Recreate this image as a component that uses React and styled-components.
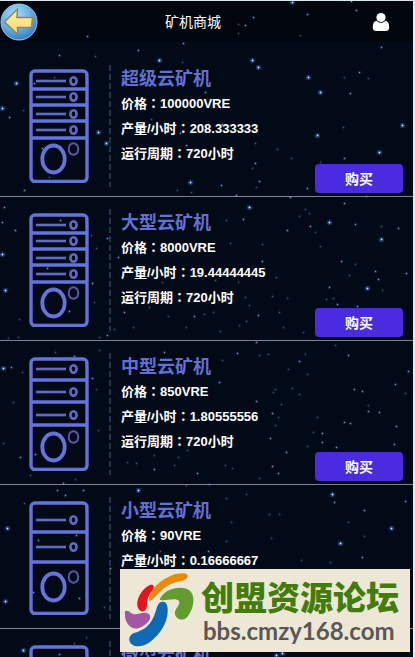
// 矿机商城 页面：顶部栏 + 矿机列表 + 右下角论坛标识

import React from 'react';
import styled, { createGlobalStyle } from 'styled-components';

const GlobalStyle = createGlobalStyle`
  * {
    box-sizing: border-box;
  }

  body {
    margin: 0;
    background: #020814;
    font-family: "Liberation Sans", "Noto Sans CJK SC", sans-serif;
  }
`;

const Page = styled.div`
  position: relative;
  height: 100vh;
  display: flex;
  flex-direction: column;
  overflow: hidden;
  border-top: 1px solid #d9e8ea;
  border-right: 2px solid #e6edf5;
  background: #020a17;
`;

const Sky = styled.svg`
  position: absolute;
  inset: 0;
  width: 100%;
  height: 100%;
  pointer-events: none;
`;

const HeaderBar = styled.header`
  flex: none;
  height: 41px;
  display: flex;
  align-items: center;
  background: rgba(0, 2, 8, 0.6);
`;

const IconButton = styled.button`
  width: ${({ $width }) => $width}px;
  height: 40px;
  display: flex;
  align-items: center;
  justify-content: center;
  padding: 0;
  border: none;
  background: none;
  cursor: pointer;
`;

const PageTitle = styled.h1`
  flex: 1;
  margin: 0;
  text-align: center;
  font-size: 14px;
  font-weight: 400;
  line-height: 20px;
  color: #fff;
`;

const List = styled.main`
  position: relative;
  flex: 1;
  min-height: 0;
  padding-top: 11px;
  overflow-y: auto;
  scrollbar-width: none;
`;

const Row = styled.article`
  height: 144px;
  display: flex;
  padding: 12px 10px 3px 29px;
  border-bottom: 1px solid #7d8291;
`;

const Picture = styled.div`
  width: 82px;
  height: 122px;
  flex: none;
  padding-top: 4px;
  background: repeating-linear-gradient(#26334d 0 6px, transparent 6px 9px) right top / 2px 100% no-repeat;
`;

const Info = styled.div`
  flex: 1;
  padding-left: 10px;
`;

const Name = styled.h2`
  margin: 0;
  padding-top: 2px;
  font-size: 18px;
  font-weight: 700;
  line-height: 24px;
  color: #6270d6;
`;

const Line = styled.p`
  margin: 0;
  font-size: 13px;
  font-weight: 700;
  line-height: 25px;
  white-space: nowrap;
  color: #fff;
`;

// 日文字形的冒号居中
const Colon = styled.span`
  font-family: "Noto Sans CJK JP", sans-serif;
  line-height: 1;
`;

const BuyButton = styled.button`
  align-self: flex-end;
  width: 88px;
  height: 29px;
  margin-left: -88px;
  padding: 0;
  border: none;
  border-radius: 4px;
  background: #4a2be0;
  font-family: inherit;
  font-size: 14px;
  font-weight: 700;
  line-height: 28px;
  color: #fff;
  cursor: pointer;
`;

const Watermark = styled.aside`
  position: absolute;
  right: 3px;
  bottom: 5px;
  width: 290px;
  height: 83px;
  display: flex;
  align-items: center;
  gap: 6px;
  padding-left: 3px;
  background: #ede8d5;
`;

const ForumName = styled.div`
  font-size: 33px;
  font-weight: 900;
  line-height: 40px;
  white-space: nowrap;
  color: #437c0c;
`;

const ForumUrl = styled.div`
  padding-left: 2px;
  font-family: Lato, sans-serif;
  font-size: 24px;
  font-weight: 700;
  line-height: 24px;
  color: #5a5756;
`;

// [x, y, 亮度 1-3]
const stars = [
  [87, 36, 2], [59, 55, 2], [95, 56, 1], [138, 50, 2], [159, 60, 3], [183, 43, 2], [182, 62, 1], [16, 83, 3], [34, 83, 2],
  [292, 2, 3], [351, 1, 2], [356, 10, 2], [307, 14, 2], [253, 17, 2], [245, 25, 2], [238, 24, 1], [238, 33, 1], [300, 35, 1],
  [381, 47, 2], [252, 60, 3], [258, 67, 3], [308, 77, 3], [320, 92, 3], [359, 72, 2], [344, 77, 1], [368, 78, 1], [350, 93, 2],
  [2, 108, 3], [9, 117, 2], [23, 110, 1], [98, 132, 3], [106, 143, 3], [24, 190, 2], [42, 148, 2], [49, 177, 1], [54, 77, 1],
  [190, 182, 3], [186, 145, 2], [180, 133, 2], [151, 119, 1], [177, 190, 1], [191, 192, 1], [205, 92, 2],
  [402, 125, 3], [317, 135, 3], [379, 152, 3], [343, 127, 1], [344, 158, 2], [320, 162, 1], [255, 143, 1], [277, 149, 1],
  [291, 158, 1], [255, 163, 2], [252, 168, 1], [259, 181, 2], [256, 187, 1], [307, 188, 2], [221, 185, 2], [236, 195, 2],
  [290, 197, 2], [366, 196, 2], [222, 124, 2], [4, 207, 2], [2, 222, 2], [15, 230, 2], [2, 254, 3], [5, 290, 3], [60, 220, 2],
  [107, 238, 2], [96, 248, 1], [118, 257, 2], [92, 283, 2], [94, 302, 1], [69, 311, 2], [107, 335, 2], [99, 337, 1],
  [114, 329, 1], [19, 319, 1], [47, 268, 2], [124, 312, 2], [162, 282, 1], [149, 307, 1], [168, 316, 1], [194, 316, 2],
  [204, 314, 1], [186, 327, 1], [133, 327, 1], [8, 338, 1], [18, 337, 1], [91, 235, 1], [249, 207, 3], [243, 219, 2],
  [226, 220, 1], [344, 203, 2], [329, 222, 3], [310, 226, 2], [305, 209, 1], [299, 216, 1], [309, 213, 1], [355, 224, 2],
  [381, 226, 1], [398, 228, 2], [381, 239, 3], [287, 230, 2], [315, 232, 1], [230, 243, 1], [262, 244, 1], [320, 246, 1],
  [262, 261, 2], [341, 261, 2], [355, 264, 1], [349, 275, 1], [375, 271, 2], [378, 279, 2], [406, 273, 2], [329, 287, 2],
  [367, 288, 3], [382, 290, 1], [326, 299, 1], [333, 298, 1], [337, 304, 2], [357, 306, 2], [245, 297, 1], [272, 296, 1],
  [287, 298, 1], [249, 305, 1], [258, 315, 2], [279, 312, 1], [213, 312, 1], [246, 321, 1], [239, 325, 1], [220, 331, 1],
  [283, 327, 1], [303, 332, 1], [256, 342, 2], [335, 345, 1], [238, 282, 1], [215, 280, 1], [276, 277, 1], [3, 368, 3],
  [11, 367, 2], [22, 372, 1], [13, 402, 1], [3, 443, 1], [20, 457, 2], [35, 454, 2], [30, 475, 1], [63, 483, 2], [57, 490, 2],
  [75, 479, 1], [83, 490, 2], [74, 356, 2], [55, 352, 1], [99, 350, 1], [92, 378, 2], [96, 389, 1], [98, 430, 1],
  [138, 490, 3], [127, 462, 1], [136, 463, 1], [154, 469, 2], [154, 455, 1], [178, 457, 1], [197, 473, 2], [174, 465, 1],
  [187, 450, 1], [164, 352, 2], [186, 485, 1], [237, 353, 2], [259, 355, 1], [268, 354, 1], [299, 361, 2], [305, 354, 1],
  [348, 355, 2], [222, 360, 1], [219, 382, 2], [288, 369, 1], [307, 374, 1], [408, 371, 2], [395, 384, 2], [405, 393, 1],
  [354, 389, 2], [362, 391, 2], [299, 394, 1], [292, 388, 1], [275, 389, 1], [273, 392, 1], [256, 401, 2], [281, 404, 1],
  [272, 413, 2], [278, 417, 1], [275, 425, 1], [368, 405, 1], [368, 411, 2], [379, 412, 2], [317, 417, 1], [344, 422, 2],
  [350, 423, 2], [396, 426, 2], [270, 438, 2], [313, 432, 1], [322, 433, 2], [322, 442, 2], [307, 446, 1], [336, 447, 2],
  [394, 444, 2], [286, 452, 2], [225, 465, 1], [232, 468, 1], [272, 466, 2], [278, 473, 2], [259, 478, 1], [209, 484, 2],
  [332, 494, 3], [246, 494, 1], [7, 528, 3], [65, 495, 2], [24, 503, 1], [76, 535, 2], [38, 540, 2], [110, 568, 2],
  [33, 592, 2], [79, 598, 2], [5, 601, 3], [104, 607, 1], [23, 650, 3], [59, 654, 2], [74, 643, 1], [86, 637, 1],
  [193, 516, 2], [160, 551, 1], [334, 502, 2], [364, 510, 2], [405, 501, 2], [391, 528, 3], [348, 522, 1], [364, 536, 1],
  [340, 543, 3], [362, 557, 2], [269, 514, 1], [279, 514, 1], [271, 538, 1], [226, 498, 1], [231, 522, 1], [226, 541, 1],
  [301, 560, 1], [330, 562, 1], [208, 551, 2], [276, 655, 3], [282, 653, 3],
];

const glow = { 1: 0.35, 2: 0.65, 3: 1 };

// bays: 每层隔板的 y；slots: 每层插槽的 y；fan: 底部风扇的 y
const fiveBay = { bays: [20, 36, 52, 69], slots: [12, 28, 45, 61], fan: 90 };
const fourBay = { bays: [23, 45, 68], slots: [12, 35, 58], fan: 90 };
const threeBay = { bays: [31, 61], slots: [19, 46], fan: 86 };

const machines = [
  { name: '超级云矿机', price: '100000VRE', output: '208.333333', shape: fiveBay },
  { name: '大型云矿机', price: '8000VRE', output: '19.44444445', shape: fiveBay },
  { name: '中型云矿机', price: '850VRE', output: '1.80555556', shape: fourBay },
  { name: '小型云矿机', price: '90VRE', output: '0.16666667', shape: threeBay },
  { name: '微型云矿机', price: '10VRE', output: '0.01666667', shape: threeBay },
];

function StarrySky() {
  return (
    <Sky aria-hidden="true">
      {stars.map(([x, y, level]) => (
        <g key={`${x}-${y}`} opacity={glow[level]}>
          <circle cx={x + 0.5} cy={y - 0.5} r={level === 3 ? 2.8 : 1.8} fill="#2f62b0" opacity="0.45" />
          <circle cx={x + 0.5} cy={y - 0.5} r={level === 3 ? 1 : 0.7} fill="#cfe4ff" />
        </g>
      ))}
    </Sky>
  );
}

function BackIcon() {
  return (
    <svg width="38" height="38" viewBox="0 0 38 38" aria-hidden="true">
      <defs>
        <radialGradient id="ball" cx="0.4" cy="0.3" r="0.75">
          <stop offset="0" stopColor="#a9dcf6" />
          <stop offset="0.55" stopColor="#66b0e4" />
          <stop offset="1" stopColor="#2d78be" />
        </radialGradient>
        <linearGradient id="arrow" x1="0" y1="0" x2="0" y2="1">
          <stop offset="0" stopColor="#fff0a0" />
          <stop offset="1" stopColor="#f6d970" />
        </linearGradient>
      </defs>
      <circle cx="19" cy="19" r="18" fill="url(#ball)" stroke="#9ccbea" />
      <path
        d="M4.5 19 L17.5 6 L17 14.5 L32.5 14.5 L31.5 24.5 L17.5 24.5 L18 31.5 Z"
        fill="url(#arrow)"
        stroke="#8a8468"
        strokeWidth="1.5"
        strokeLinejoin="round"
      />
    </svg>
  );
}

function UserIcon() {
  return (
    <svg width="18" height="20" viewBox="0 0 18 20" fill="#fff" aria-hidden="true">
      <circle cx="9" cy="5.5" r="4.6" />
      <path d="M4.7 8.7 C2 9 .8 11.5 .8 15.6 C.8 17.8 2 19 4 19 H14 C16 19 17.2 17.8 17.2 15.6 C17.2 11.5 16 9 13.3 8.7 C12.2 10 10.7 10.8 9 10.8 C7.3 10.8 5.8 10 4.7 8.7 Z" />
    </svg>
  );
}

function MachineIcon({ bays, slots, fan }) {
  return (
    <svg width="60" height="114" viewBox="0 0 60 114" fill="none" stroke="#6573dc" strokeWidth="3.4" aria-hidden="true">
      <rect x="2" y="2" width="56" height="110.5" rx="4" />
      {bays.map((y) => (
        <path key={y} d={`M2 ${y} H58`} />
      ))}
      {slots.map((y) => (
        <g key={y} stroke="#5f6bc4" strokeWidth="2.6">
          <path d={`M7 ${y} H37`} />
          <ellipse cx="44.5" cy={y} rx="3.1" ry="3.7" />
        </g>
      ))}
      <ellipse cx="24.5" cy={fan} rx="11.2" ry="13.5" strokeWidth="3.8" />
      <ellipse cx="44.5" cy={fan - 10} rx="4.8" ry="5.8" stroke="#525da8" strokeWidth="2" />
    </svg>
  );
}

function ForumLogo() {
  return (
    <svg width="72" height="77" viewBox="0 0 72 77" fill="none" aria-hidden="true">
      <path d="M26 27 C27 17 39 6 53 2 C62 0 67 2 64 6 C61 10 53 9 46 13 C38 17 33 25 29 28 C27 29 25 29 26 27 Z" fill="#e88a0b" />
      <path d="M15 36 C12 29 18 17 27 13 C31 12 32 15 29 19 C25 24 24 28 24 34 C23 41 17 41 15 36 Z" fill="#e01620" />
      <path d="M38 25 C43 17 57 13 66 18 C73 23 71 36 65 44 C61 50 53 48 52 42 C51 37 58 33 56 29 C53 25 44 29 38 28 C36 28 37 27 38 25 Z" fill="#629b2e" />
      <path d="M2 41 C1 38 5 38 8 41 C13 45 20 38 26 42 C30 46 24 53 16 56 C8 59 1 50 2 41 Z" fill="#a257a5" />
      <path d="M44 33 C46 40 44 51 37 60 C30 69 21 76 12 74 C5 72 4 64 11 61 C19 59 25 55 29 48 C34 40 33 32 38 30 C41 29 43 30 44 33 Z" fill="#1069b5" />
    </svg>
  );
}

function Field({ label, value }) {
  return (
    <Line>
      {label}
      <Colon lang="ja">：</Colon>
      {value}
    </Line>
  );
}

export default function App() {
  return (
    <>
      <GlobalStyle />
      <Page lang="zh-CN">
        <StarrySky />
        <HeaderBar>
          <IconButton type="button" $width={38} aria-label="返回">
            <BackIcon />
          </IconButton>
          <PageTitle>矿机商城</PageTitle>
          <IconButton type="button" $width={65} aria-label="个人中心">
            <UserIcon />
          </IconButton>
        </HeaderBar>

        <List>
          {machines.map((machine) => (
            <Row key={machine.name}>
              <Picture>
                <MachineIcon {...machine.shape} />
              </Picture>
              <Info>
                <Name>{machine.name}</Name>
                <Field label="价格" value={machine.price} />
                <Field label="产量/小时" value={machine.output} />
                <Field label="运行周期" value="720小时" />
              </Info>
              <BuyButton type="button">购买</BuyButton>
            </Row>
          ))}
        </List>

        <Watermark>
          <ForumLogo />
          <div>
            <ForumName>创盟资源论坛</ForumName>
            <ForumUrl>bbs.cmzy168.com</ForumUrl>
          </div>
        </Watermark>
      </Page>
    </>
  );
}
